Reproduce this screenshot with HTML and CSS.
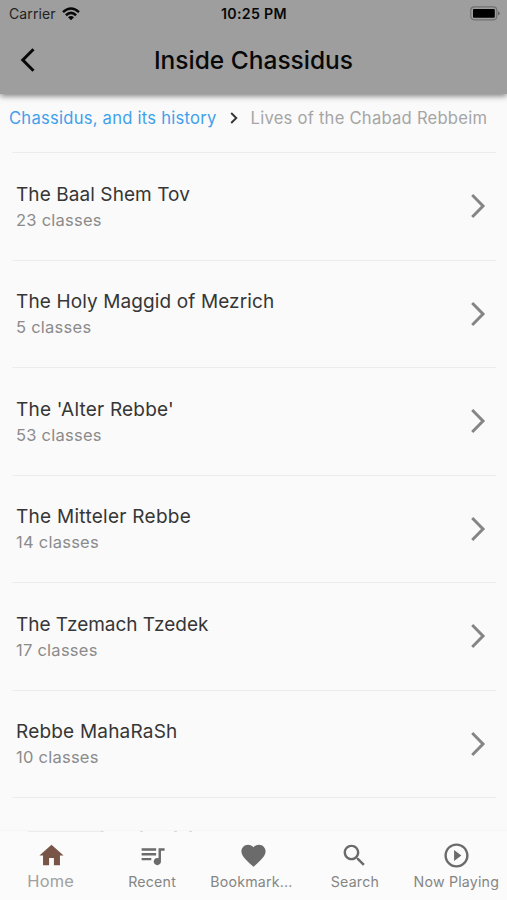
FILE: index.html
```html
<!DOCTYPE html>
<html lang="en">
<head>
<meta charset="utf-8">
<title>Inside Chassidus</title>
<link rel="stylesheet" href="styles.css">
</head>
<body>
<div class="app">
  <header class="header">
    <div class="status">
      <div class="carrier"><span class="carrier-name">Carrier</span>
        <svg class="wifi" viewBox="0 0 18 14" fill="none" stroke="#080808" stroke-width="2.5"><path d="M1 5.1Q9-2.1 17 5.1M3.9 8.2Q9 3.6 14.1 8.2"/><path d="M6 10.2Q9 7.7 12 10.2L9 13.3Z" fill="#080808" stroke="none"/></svg>
      </div>
      <span class="time">10:25 PM</span>
      <svg class="battery" viewBox="0 0 31 15"><rect x=".8" y=".8" width="26" height="13" rx="3.5" fill="none" stroke="#707070" stroke-width="1.2"/><rect x="3" y="3" width="21.8" height="8.8" rx="1" fill="#000"/><path d="M28 5Q31.5 7.3 28 9.6Z" fill="#666"/></svg>
    </div>
    <div class="toolbar">
      <svg class="back" viewBox="0 0 16 24" fill="none" stroke="#080808" stroke-width="3"><path d="M13.5 1.2 2.8 12l10.7 10.8"/></svg>
      <h1 class="title">Inside Chassidus</h1>
    </div>
  </header>
  <nav class="crumbs">
    <a class="crumb-link">Chassidus, and its history</a>
    <svg class="crumb-arrow" viewBox="0 0 8 12" fill="none" stroke="#333" stroke-width="1.9"><path d="M1.2 1 6.3 6 1.2 11"/></svg>
    <span class="crumb-current">Lives of the Chabad Rebbeim</span>
  </nav>
  <main class="list">
    <div class="row"><div><div class="name n1">The Baal Shem Tov</div><div class="count">23 classes</div></div><svg class="chev" viewBox="0 0 16 26"><path d="M2.2 2 13 13 2.2 24"/></svg></div>
    <div class="row"><div><div class="name n2">The Holy Maggid of Mezrich</div><div class="count">5 classes</div></div><svg class="chev" viewBox="0 0 16 26"><path d="M2.2 2 13 13 2.2 24"/></svg></div>
    <div class="row"><div><div class="name n3">The 'Alter Rebbe'</div><div class="count">53 classes</div></div><svg class="chev" viewBox="0 0 16 26"><path d="M2.2 2 13 13 2.2 24"/></svg></div>
    <div class="row"><div><div class="name n4">The Mitteler Rebbe</div><div class="count">14 classes</div></div><svg class="chev" viewBox="0 0 16 26"><path d="M2.2 2 13 13 2.2 24"/></svg></div>
    <div class="row"><div><div class="name n5">The Tzemach Tzedek</div><div class="count">17 classes</div></div><svg class="chev" viewBox="0 0 16 26"><path d="M2.2 2 13 13 2.2 24"/></svg></div>
    <div class="row"><div><div class="name n6">Rebbe MahaRaSh</div><div class="count">10 classes</div></div><svg class="chev" viewBox="0 0 16 26"><path d="M2.2 2 13 13 2.2 24"/></svg></div>
    <div class="row"></div>
  </main>
  <nav class="tabs">
    <svg class="edge" viewBox="0 0 200 2"><path d="M28 .5h73" stroke="#ececec"/><path d="M101 .5h2.5M140 .5h3M174 .5h3M189 .5h3" stroke="#dadada"/></svg>
    <div class="tab active"><svg viewBox="0 0 24 24"><path d="M10 20v-6h4v6h5v-8h3L12 3 2 12h3v8z"/></svg><span>Home</span></div>
    <div class="tab"><svg viewBox="0 0 24 24"><path d="M15 6H3v2h12V6zm0 4H3v2h12v-2zM3 16h8v-2H3v2zM17 6v8.18c-.31-.11-.65-.18-1-.18-1.66 0-3 1.34-3 3s1.34 3 3 3 3-1.34 3-3V8h3V6h-5z"/></svg><span>Recent</span></div>
    <div class="tab"><svg viewBox="0 0 24 24"><path d="M12 21.35l-1.45-1.32C5.4 15.36 2 12.28 2 8.5 2 5.42 4.42 3 7.5 3c1.74 0 3.41.81 4.5 2.09C13.09 3.81 14.76 3 16.5 3 19.58 3 22 5.42 22 8.5c0 3.78-3.4 6.86-8.55 11.54L12 21.35z"/></svg><span class="bookmark">Bookmark...</span></div>
    <div class="tab"><svg viewBox="0 0 24 24"><path d="M15.5 14h-.79l-.28-.27C15.41 12.59 16 11.11 16 9.5 16 5.91 13.09 3 9.5 3S3 5.91 3 9.5 5.91 16 9.5 16c1.61 0 3.09-.59 4.23-1.57l.27.28v.79l5 4.99L20.49 19l-4.99-5zm-6 0C7.01 14 5 11.99 5 9.5S7.01 5 9.5 5 14 7.01 14 9.5 11.99 14 9.5 14z"/></svg><span>Search</span></div>
    <div class="tab"><svg viewBox="0 0 24 24"><path d="M10 16.5l6-4.5-6-4.5v9zM12 2C6.48 2 2 6.48 2 12s4.48 10 10 10 10-4.48 10-10S17.52 2 12 2zm0 18c-4.41 0-8-3.59-8-8s3.59-8 8-8 8 3.59 8 8-3.59 8-8 8z"/></svg><span>Now Playing</span></div>
  </nav>
</div>
</body>
</html>
```
FILE: styles.css
```css
* { box-sizing: border-box; }
body { margin: 0; background: #fafafa; font-family: Inter, "Liberation Sans", sans-serif; }
.app { width: 507px; height: 900px; display: flex; flex-direction: column; overflow: hidden; }
.header { height: 94px; flex: none; background: #9e9e9e; color: #080808; box-shadow: 0 2px 6px rgba(0,0,0,.5); }
.status { height: 27px; display: grid; grid-template-columns: 1fr auto 1fr; align-items: center; padding: 0 6px 0 7px; }
.carrier { display: flex; align-items: center; gap: 6px; color: #222; padding-left: 2px; }
.carrier-name { font-size: 14px; letter-spacing: .1px; }
.wifi { width: 18px; height: 14px; }
.time { font-size: 14.2px; font-weight: 600; letter-spacing: .3px; }
.battery { width: 31px; height: 15px; justify-self: end; }
.toolbar { height: 66px; display: grid; grid-template-columns: 40px 1fr 40px; align-items: center; }
.back { width: 16px; height: 24px; margin-left: 20px; }
.title { margin: 0; font-size: 24.5px; line-height: 30px; font-weight: 500; text-align: center; }
.crumbs { height: 58px; flex: none; display: flex; align-items: center; padding: 0 0 10px 9px; font-size: 16.6px; letter-spacing: .24px; white-space: nowrap; }
.crumb-link { color: #42a0ea; }
.crumb-arrow { width: 8px; height: 12px; margin: 0 13px; }
.crumb-current { color: #a5a5a5; }
.list { flex: 1; min-height: 0; overflow: hidden; padding: 0 11px 0 12px; }
.row { height: 107.5px; border-top: 1px solid #ececec; display: flex; justify-content: space-between; align-items: center; padding: 0 10px 0 4px; }
.name { font-size: 19px; line-height: 26px; padding-top: 1px; color: #363636; letter-spacing: .2px; }
.n1 { letter-spacing: .08px; }
.n2 { letter-spacing: .12px; }
.n4 { letter-spacing: .28px; }
.n5 { letter-spacing: -.05px; }
.count { font-size: 16.5px; line-height: 24px; color: #8b8b8b; letter-spacing: .25px; }
.chev { width: 16px; height: 26px; fill: none; stroke: #858585; stroke-width: 3; }
.tabs { position: relative; height: 70px; flex: none; display: grid; grid-template-columns: repeat(5, 1fr); border-top: 1px solid #f5f5f5; background: #fbfbfb; }
.edge { position: absolute; left: 0; top: 0; width: 200px; height: 2px; }
.tab { display: flex; flex-direction: column; align-items: center; padding-top: 10px; color: #858585; font-size: 14.2px; letter-spacing: .2px; line-height: 20px; white-space: nowrap; }
.tab svg { width: 29px; height: 29px; fill: #6b6b6b; flex: none; }
.tab span { margin-top: 2px; }
.bookmark { margin-right: 4px; }
.tab.active { color: #a0a0a0; font-size: 16.4px; letter-spacing: .2px; }
.tab.active svg { fill: #795548; margin-left: 1px; }
.tab.active span { margin-top: 1px; }
```
